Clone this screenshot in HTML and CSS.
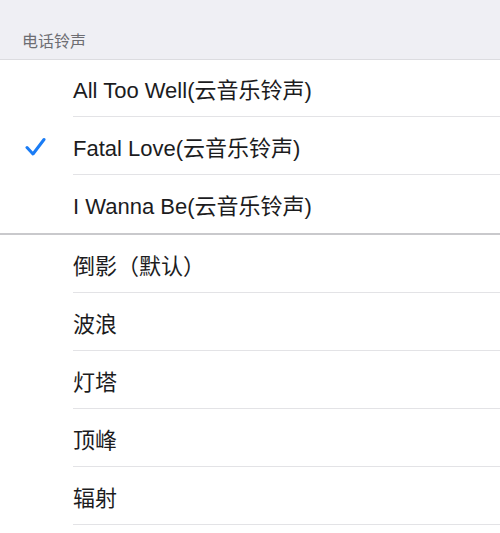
FILE: index.html
```html
<!DOCTYPE html>
<html lang="zh">
<head>
    <meta charset="UTF-8">
    <meta name="viewport" content="width=device-width, initial-scale=1.0">
    <title>电话铃声</title>
    <link rel="stylesheet" href="styles.css">
</head>
<body>

    <!-- Section header -->
    <div class="section-header">电话铃声</div>

    <!-- Cloud music ringtones -->
    <ul class="tone-list">
        <li class="tone-row"><span class="check"></span><span class="tone-name">All Too Well(云音乐铃声)</span></li>
        <li class="tone-row">
            <span class="check">
                <svg width="21" height="20" viewBox="0 0 21 20">
                    <path d="M2 10.5 L8 17 L19 2.5" fill="none" stroke="#1a7cf5" stroke-width="3" stroke-linecap="round" stroke-linejoin="round"/>
                </svg>
            </span>
            <span class="tone-name">Fatal Love(云音乐铃声)</span>
        </li>
        <li class="tone-row last"><span class="check"></span><span class="tone-name">I Wanna Be(云音乐铃声)</span></li>
    </ul>

    <!-- Built-in ringtones -->
    <ul class="tone-list builtin">
        <li class="tone-row"><span class="check"></span><span class="tone-name">倒影（默认）</span></li>
        <li class="tone-row"><span class="check"></span><span class="tone-name">波浪</span></li>
        <li class="tone-row"><span class="check"></span><span class="tone-name">灯塔</span></li>
        <li class="tone-row"><span class="check"></span><span class="tone-name">顶峰</span></li>
        <li class="tone-row"><span class="check"></span><span class="tone-name">辐射</span></li>
    </ul>

</body>
</html>
```

FILE: styles.css
```css
/* Basic Reset */
* {
    margin: 0;
    padding: 0;
    box-sizing: border-box;
}

body {
    font-family: 'Liberation Sans', 'Noto Sans CJK SC', sans-serif;
    background: #fff;
    width: 500px;
    height: 533px;
    overflow: hidden;
}

/* Section header */
.section-header {
    height: 60px;
    background: #efeff4;
    border-bottom: 1px solid #dcdce0;
    padding: 31px 0 0 22px;
    color: #6d6d72;
    font-size: 16px;
    line-height: 22px;
}

/* Lists */
.tone-list {
    list-style: none;
}

.builtin {
    border-top: 2px solid #c9c9cc;
}

.tone-row {
    display: flex;
    align-items: center;
    height: 58px;
}

.tone-row .check {
    width: 73px;
    flex-shrink: 0;
    display: flex;
    padding-left: 25px;
    padding-top: 2px;
}

.tone-name {
    flex: 1;
    align-self: stretch;
    display: flex;
    align-items: center;
    border-bottom: 1px solid #e3e3e6;
    color: #1c1c1e;
    font-size: 22px;
}

.tone-list:first-of-type .tone-row:first-child {
    height: 57px;
}

.tone-row.last .tone-name {
    border-bottom: none;
}
```
